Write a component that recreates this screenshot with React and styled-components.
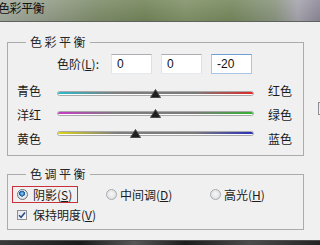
import React from "react";
import styled, { createGlobalStyle } from "styled-components";

const GlobalStyle = createGlobalStyle`
  html, body {
    margin: 0;
    padding: 0;
  }
  body {
    width: 320px;
    height: 245px;
    overflow: hidden;
    background: #f0f0f0;
    font-family: "Noto Sans CJK SC", "Noto Sans", sans-serif;
    font-size: 12px;
    color: #1b1b1b;
  }
`;

const Window = styled.div`
  width: 320px;
  height: 245px;
  display: flex;
  flex-direction: column;
  overflow: hidden;
`;

const TitleBar = styled.div`
  flex: none;
  height: 21px;
  border-bottom: 1px solid #5f625c;
  background: linear-gradient(180deg, rgba(255, 255, 255, 0.1), rgba(0, 0, 0, 0.06)),
    linear-gradient(
      90deg,
      #a5aca1 0%,
      #97a08e 12%,
      #808e6c 30%,
      #74865a 45%,
      #829369 58%,
      #77895d 72%,
      #8b9680 86%,
      #a7a5af 93%,
      #8d8998 100%
    );
  line-height: 16px;
  color: #111;
`;

const TitleText = styled.span`
  display: inline-block;
  margin-left: -2px;
  letter-spacing: -0.4px;
`;

const Dialog = styled.div`
  flex: 1;
  display: flex;
  align-items: flex-start;
  padding-top: 12px;
`;

const Main = styled.div`
  flex: none;
  width: 304px;
  padding-left: 7px;
  box-sizing: border-box;
`;

// the preview checkbox at the right edge, mostly off-screen
const Side = styled.div`
  flex: none;
  margin: 68px 0 0 14px;
`;

const Group = styled.fieldset`
  margin: ${(p) => p.$top || 0}px 0 0 0;
  padding: 0 0 ${(p) => p.$bottom}px 0;
  width: 297px;
  box-sizing: border-box;
  border: 1px solid #ababab;
  min-inline-size: 0;
`;

const Legend = styled.legend`
  margin-left: 18px;
  padding: 0 2px 0 4px;
  height: 16px;
  line-height: 16px;
  letter-spacing: 2.5px;
  color: #262626;
`;

const Key = styled.span`
  text-decoration: underline;
  text-underline-offset: 1px;
`;

const LevelRow = styled.div`
  display: flex;
  align-items: center;
  height: 20px;
  margin-top: 4px;
  padding-left: 49px;
`;

const LevelLabel = styled.span`
  width: 54px;
  line-height: 16px;
`;

const Fields = styled.div`
  display: flex;
  gap: 9px;
`;

const NumField = styled.input`
  width: 41px;
  height: 20px;
  box-sizing: border-box;
  margin: 0;
  padding: 0 0 0 5px;
  border: 1px solid;
  border-color: ${(p) =>
    p.$focused ? "#6f9fd2 #a9c6e6 #a9c6e6 #a9c6e6" : "#abadb3 #dbdfe6 #e3e9ef #e2e3ea"};
  background: #fff;
  font-family: "Liberation Sans", "Noto Sans", sans-serif;
  font-size: 12px;
  color: #111;
  outline: none;
`;

const SliderArea = styled.div`
  display: flex;
  align-items: flex-start;
  margin-top: 9px;
  padding-left: 9px;
`;

const LabelCol = styled.div`
  display: flex;
  flex-direction: column;
  gap: 8px;
  width: 24px;
  line-height: 16px;
  white-space: nowrap;
`;

const SliderCol = styled.div`
  display: flex;
  flex-direction: column;
  gap: 10px;
  width: 197px;
  margin: 6px 14px 0 16px;
`;

const Slider = styled.div`
  position: relative;
  height: 10px;
`;

const Track = styled.div`
  margin-top: 2px;
  height: 5px;
  box-sizing: border-box;
  border: 1px solid #a9a9a9;
  border-radius: 3px;
  background: #fdfdfd;
  overflow: hidden;
`;

const Fill = styled.div`
  height: 2px;
  background: linear-gradient(
    90deg,
    ${(p) => p.$from} 0%,
    #7e7e7e 30%,
    #7a7a7a 70%,
    ${(p) => p.$to} 100%
  );
`;

const Thumb = styled.svg`
  position: absolute;
  top: 0;
  width: 11px;
  height: 9px;
`;

const RadioRow = styled.div`
  display: grid;
  grid-template-columns: 94px 104px auto;
  align-items: center;
  margin: 4px 0 0 4px;
  height: 17px;
`;

const RadioItem = styled.label`
  display: flex;
  align-items: center;
  gap: ${(p) => (p.$boxed ? 5 : 3)}px;
  height: 17px;
  box-sizing: border-box;
  width: ${(p) => (p.$boxed ? "66px" : "auto")};
  padding-left: ${(p) => (p.$boxed ? 4 : 0)}px;
  border: ${(p) => (p.$boxed ? "1px solid #c6313a" : "none")};
  line-height: 16px;
  white-space: nowrap;
`;

const RadioDot = styled.span`
  flex: none;
  width: 11px;
  height: 11px;
  box-sizing: border-box;
  border-radius: 50%;
  border: 1px solid ${(p) => (p.$on ? "#6d7178" : "#a9abaf")};
  background: ${(p) =>
    p.$on
      ? "radial-gradient(circle at 45% 40%, #9fdcf7 0, #3a8bd0 22%, #1b5797 38%, #e9ecef 44%, #d6d9dd 100%)"
      : "radial-gradient(circle at 50% 45%, #f7f7f7 0, #e6e7e9 55%, #cfd1d4 100%)"};
`;

const CheckRow = styled.label`
  display: flex;
  align-items: center;
  gap: 6px;
  height: 16px;
  margin: 4px 0 0 9px;
  line-height: 16px;
`;

const CheckBox = styled.span`
  flex: none;
  display: flex;
  align-items: center;
  justify-content: center;
  width: ${(p) => p.$size || 10}px;
  height: ${(p) => p.$size || 10}px;
  box-sizing: border-box;
  border: 1px solid #8b8e93;
  background: linear-gradient(135deg, #e4e6e9, #fbfbfb);
`;

const Footer = styled.div`
  flex: none;
  height: 5px;
  box-sizing: border-box;
  border-top: 1px solid #4d4d4d;
  background: linear-gradient(
    90deg,
    #3a3a3a 0%,
    #1a1a1a 25%,
    #575757 42%,
    #1c1c1c 58%,
    #4c4c4c 78%,
    #242424 100%
  );
`;

const sliders = [
  { left: "青色", right: "红色", from: "#2cb9cb", to: "#e02828", value: 0 },
  { left: "洋红", right: "绿色", from: "#c63cc6", to: "#33b233", value: 0 },
  { left: "黄色", right: "蓝色", from: "#dcd41a", to: "#2a30bb", value: -20 },
];

const TRACK_WIDTH = 197;

const Check = () => (
  <svg width="8" height="8" viewBox="0 0 8 8">
    <path d="M1 4.2 L3.1 6.3 L7 1.4" fill="none" stroke="#2b4f8c" strokeWidth="1.6" />
  </svg>
);

const App = () => {
  return (
    <>
      <GlobalStyle />
      <Window>
        <TitleBar>
          <TitleText>色彩平衡</TitleText>
        </TitleBar>
        <Dialog>
          <Main>
            <Group $bottom={8}>
              <Legend>色彩平衡</Legend>
              <LevelRow>
                <LevelLabel>
                  色阶(<Key>L</Key>):
                </LevelLabel>
                <Fields>
                  <NumField defaultValue="0" />
                  <NumField defaultValue="0" />
                  <NumField defaultValue="-20" $focused />
                </Fields>
              </LevelRow>
              <SliderArea>
                <LabelCol>
                  {sliders.map((s) => (
                    <span key={s.left}>{s.left}</span>
                  ))}
                </LabelCol>
                <SliderCol>
                  {sliders.map((s) => (
                    <Slider key={s.left}>
                      <Track>
                        <Fill $from={s.from} $to={s.to} />
                      </Track>
                      <Thumb
                        viewBox="0 0 11 9"
                        style={{ left: ((s.value + 100) / 200) * TRACK_WIDTH - 5.5 }}
                      >
                        <polygon points="5.5,0.5 10.5,8.5 0.5,8.5" fill="#1f1f1f" stroke="#4a4a4a" strokeWidth="1" />
                      </Thumb>
                    </Slider>
                  ))}
                </SliderCol>
                <LabelCol>
                  {sliders.map((s) => (
                    <span key={s.right}>{s.right}</span>
                  ))}
                </LabelCol>
              </SliderArea>
            </Group>

            <Group $top={10} $bottom={6}>
              <Legend>色调平衡</Legend>
              <RadioRow>
                <RadioItem $boxed>
                  <RadioDot $on />
                  <span>
                    阴影(<Key>S</Key>)
                  </span>
                </RadioItem>
                <RadioItem>
                  <RadioDot />
                  <span>
                    中间调(<Key>D</Key>)
                  </span>
                </RadioItem>
                <RadioItem>
                  <RadioDot />
                  <span>
                    高光(<Key>H</Key>)
                  </span>
                </RadioItem>
              </RadioRow>
              <CheckRow>
                <CheckBox>
                  <Check />
                </CheckBox>
                <span>
                  保持明度(<Key>V</Key>)
                </span>
              </CheckRow>
            </Group>
          </Main>
          <Side>
            <CheckBox $size={13}>
              <Check />
            </CheckBox>
          </Side>
        </Dialog>
        <Footer />
      </Window>
    </>
  );
};

export default App;
